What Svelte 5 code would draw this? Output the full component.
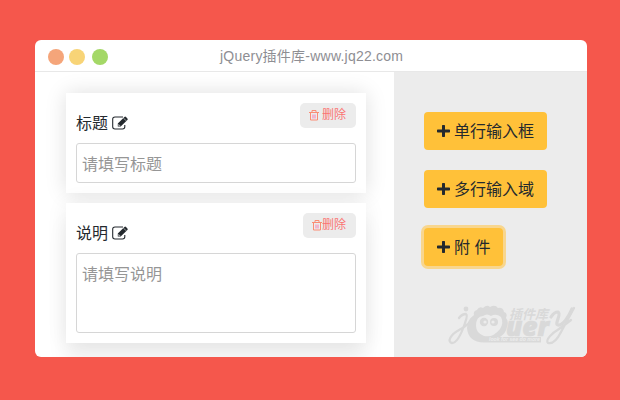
<script>
  const fields = [
    { label: '标题', hint: '请填写标题', kind: 'line', gap: true },
    { label: '说明', hint: '请填写说明', kind: 'area', gap: false }
  ];
  const actions = [
    { text: '单行输入框', active: false },
    { text: '多行输入域', active: false },
    { text: '附 件', active: true }
  ];
</script>

<div class="page">
  <div class="window">
    <header>
      <div class="dots"><i></i><i></i><i></i></div>
      <span class="title">jQuery插件库-www.jq22.com</span>
    </header>
    <div class="body">
      <main>
        {#each fields as f}
          <section class={f.kind}>
            <div class="row">
              <label>{f.label}
                <svg class="edit" width="17" height="14" viewBox="0 0 17 14" fill="none" stroke="#24292e">
                  <path d="M11 1H3Q.7 1 .7 3.2V10.8Q.7 13 3 13H10.5Q12.8 13 12.8 10.8V9" stroke-width="1.1" />
                  <path d="M5.8 10.4V7.6L12.4 1Q13.2 .2 14 1L15.4 2.4Q16.2 3.2 15.4 4L8.7 10.4Z" fill="#24292e" stroke="none" />
                  <path d="M11.6 2.2L14.2 4.8M6.7 8.2V9.6H8.2" stroke="#fff" stroke-width=".6" />
                </svg>
              </label>
              <button class="del" class:spaced={f.gap}>
                <svg width="10" height="11" viewBox="0 0 10 11" fill="none" stroke="#fb8c74" stroke-width="1">
                  <path d="M0 2.5H10M3 2.5V.5H7V2.5M1.5 2.5V10H8.5V2.5" />
                  <path d="M4 4.5V8.5M6 4.5V8.5" stroke="#f87fae" />
                </svg><span>删除</span>
              </button>
            </div>
            <div class="input">{f.hint}</div>
          </section>
        {/each}
      </main>
      <aside>
        {#each actions as a}
          <button class="add" class:active={a.active}>
            <svg width="13" height="13" viewBox="0 0 13 13"><path d="M5.7 0H7.3Q8 0 8 .7V4.5H12.3Q13 4.5 13 5.2V6.8Q13 7.5 12.3 7.5H8V11.3Q8 12 7.3 12H5.7Q5 12 5 11.3V7.5H.7Q0 7.5 0 6.8V5.2Q0 4.5 .7 4.5H5V.7Q5 0 5.7 0Z" fill="#24292e" /></svg>
            <span>{a.text}</span>
          </button>
        {/each}
        <svg class="logo" width="130" height="42" viewBox="0 0 130 42">
          <g fill="none" stroke="#d9d9d9" stroke-linecap="round">
            <path d="M11 13Q14 9 18 9Q20 10 17 18C13 30 9 38 4 38C-1 37 2 30 11 25Q17 22 21 18" stroke-width="2.3" />
            <path d="M103 12Q106 7 110 7C114 9 106 19 110 20C115 21 121 11 124 4" stroke-width="3.2" />
            <path d="M126 3L113 27C109 35 104 39 100 38C97 35 104 28 111 24Q118 19 123 15" stroke-width="2.3" />
          </g>
          <circle cx="18" cy="4" r="2.4" fill="#d9d9d9" />
          <path d="M19 23Q19 15 26 10Q25 6 29 5Q31 1 35 3Q39-1 42 2Q47-1 50 3Q55 2 56 7Q60 8 58 13Q61 16 59 22Q58 28 52 32H93V37.5H36Q20 37 19 23Z" fill="#d9d9d9" />
          <path d="M28 21Q28 11 35 11Q39 8 43 11Q48 8 53 12Q56 18 52 24Q45 33 36 31Q28 28 28 21Z" fill="#ececec" />
          <g fill="#d9d9d9"><circle cx="36" cy="17" r="4.2" /><circle cx="46" cy="17" r="4" /></g>
          <g fill="#ececec"><circle cx="37" cy="17" r="1.6" /><circle cx="45" cy="17" r="1.6" /></g>
          <text x="61" y="13.5" class="cn" textLength="39" lengthAdjust="spacingAndGlyphs">插件库</text>
          <text x="58" y="30.5" class="uer" textLength="43" lengthAdjust="spacingAndGlyphs">uer</text>
          <text x="41" y="36.3" class="tag" textLength="51" lengthAdjust="spacingAndGlyphs">look for see do more</text>
        </svg>
      </aside>
    </div>
  </div>
</div>

<style>
  :global(body) { margin: 0; }
  * { box-sizing: border-box; }
  .page {
    width: 620px; height: 400px; padding: 40px 33px 43px 35px;
    background: #f5574c; color: #24292e;
    font-family: "Liberation Sans", "Noto Sans CJK SC", sans-serif;
  }
  .window { height: 317px; border-radius: 6px; background: #fff; overflow: hidden; display: flex; flex-direction: column; }
  header { height: 32px; flex: none; border-bottom: 1px solid #e8e8e8; display: grid; grid-template-columns: 185px 1fr; }
  .dots { display: flex; padding: 9px 0 0 13px; }
  .dots i { width: 16px; height: 16px; border-radius: 50%; background: #f5a57a; margin-right: 5px; }
  .dots i:nth-child(2) { background: #f8d477; margin-right: 7px; }
  .dots i:nth-child(3) { background: #a4d867; }
  .title { font-size: 14px; line-height: 32px; color: #8e8e93; white-space: nowrap; letter-spacing: .23px; }
  .body { flex: 1; min-height: 0; display: flex; }
  main { width: 359px; padding: 21px 28px 0 31px; display: flex; flex-direction: column; gap: 10px; overflow: hidden; }
  section { position: relative; flex: none; height: 100px; padding: 10px; background: #fff; box-shadow: 0 0 20px rgba(0, 0, 0, .13); }
  section.area { height: 140px; box-shadow: 0 0 20px rgba(0, 0, 0, .07), 0 20px 20px rgba(0, 0, 0, .06); }
  .row { display: flex; justify-content: space-between; height: 40px; }
  label { font-size: 16px; line-height: 42px; height: 40px; white-space: nowrap; }
  .edit { vertical-align: -1px; }
  button { border: 0; margin: 0; font-family: inherit; font-weight: 400; display: flex; align-items: center; white-space: nowrap; }
  .del { height: 25px; padding: 0 10px 0 9px; border-radius: 5px; background: #ececec; color: #fb7472; font-size: 12px; line-height: 25px; }
  .del.spaced span { margin-left: 3px; }
  .del span { display: block; height: 25px; }
  .input { height: 40px; border: 1px solid #d6d6d6; border-radius: 3px; padding: 0 5px; font-size: 16px; line-height: 42px; color: #969696; }
  .area .input { height: 80px; }
  aside { flex: 1; padding: 40px 0 0 30px; background: #ececec; display: flex; flex-direction: column; align-items: flex-start; position: relative; }
  .add { height: 38px; flex: none; padding: 0 13px; margin-bottom: 20px; border-radius: 4px; background: #ffc139; color: #24292e; font-size: 16px; }
  .add span { margin-left: 4px; line-height: 40px; height: 38px; }
  .add.active { box-shadow: 0 0 0 3px #f8d68e; }
  .logo { position: absolute; left: 54px; bottom: 10px; overflow: visible; }
  .logo text { font-style: italic; font-weight: bold; fill: #d9d9d9; }
  .cn { font-size: 13px; font-family: "Noto Sans CJK SC", sans-serif; }
  .logo .uer { font-size: 26px; font-weight: 800; font-family: "Open Sans", sans-serif; stroke: #d9d9d9; stroke-width: .7px; }
  .logo .tag { font-size: 5px; fill: #ececec; }
</style>
